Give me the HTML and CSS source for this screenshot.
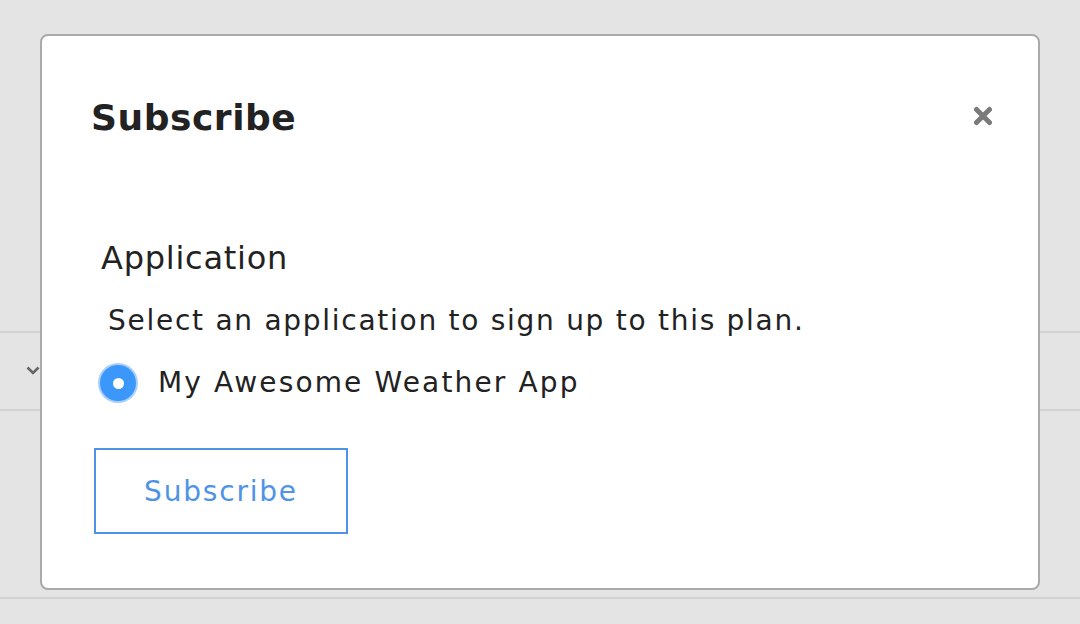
FILE: index.html
```html
<!DOCTYPE html>
<html>
<head>
<meta charset="utf-8">
<link rel="stylesheet" href="styles.css">
</head>
<body>
<div class="page">
  <div class="row-list">
    <div class="row">
      <svg class="chev" width="14" height="10" viewBox="0 0 14 10"><path d="M1.5 1.5 L7 7 L12.5 1.5" fill="none" stroke="#666" stroke-width="2.6"/></svg>
    </div>
  </div>
  <div class="footer-line"></div>
</div>
<div class="modal">
  <div class="modal-head">
    <h2 class="title">Subscribe</h2>
    <svg class="close" width="20" height="20" viewBox="0 0 20 20"><path d="M3.5 3.5 L16.5 16.5 M16.5 3.5 L3.5 16.5" stroke="#7a7a7a" stroke-width="5" stroke-linecap="round"/></svg>
  </div>
  <div class="modal-body">
    <div class="label">Application</div>
    <div class="help">Select an application to sign up to this plan.</div>
    <label class="option">
      <span class="radio"><span class="dot"></span></span>
      <span class="option-text">My Awesome Weather App</span>
    </label>
    <button class="btn">Subscribe</button>
  </div>
</div>
</body>
</html>
```
FILE: styles.css
```css
html, body {
  margin: 0;
  padding: 0;
  width: 1080px;
  height: 624px;
  overflow: hidden;
  background: #e4e4e4;
  font-family: "DejaVu Sans", Verdana, sans-serif;
}
.page {
  position: relative;
  height: 624px;
}
.row-list {
  padding-top: 331px;
}
.row {
  height: 76px;
  border-top: 2px solid #d2d2d2;
  border-bottom: 2px solid #d2d2d2;
  display: flex;
  align-items: center;
  padding-left: 26px;
}
.footer-line {
  margin-top: 186px;
  border-top: 2px solid #d2d2d2;
}
.modal {
  position: absolute;
  left: 40px;
  top: 34px;
  width: 996px;
  height: 552px;
  background: #fff;
  border: 2px solid #aaaaaa;
  border-radius: 8px;
}
.modal-head {
  display: flex;
  justify-content: space-between;
  align-items: center;
  padding: 56px 45px 0 49px;
}
.title {
  margin: 0;
  font-size: 36px;
  font-weight: bold;
  color: #222;
  line-height: 52px;
  letter-spacing: 0.55px;
}
.close {
  display: block;
  margin-top: -4px;
}
.modal-body {
  padding: 92px 0 0 52px;
  display: flex;
  flex-direction: column;
  align-items: flex-start;
}
.label {
  font-size: 32px;
  color: #222;
  line-height: 44px;
  margin-left: 7px;
  letter-spacing: 0.75px;
}
.help {
  font-size: 28px;
  color: #222;
  letter-spacing: 1.73px;
  line-height: 40px;
  margin-top: 21px;
  margin-left: 14px;
}
.option {
  display: flex;
  align-items: center;
  margin-top: 22px;
  margin-left: 6px;
}
.radio {
  width: 36px;
  height: 36px;
  border-radius: 50%;
  background: #3c97fb;
  box-shadow: 0 0 0 2px #a9cffb;
  display: flex;
  align-items: center;
  justify-content: center;
}
.dot {
  width: 11px;
  height: 11px;
  border-radius: 50%;
  background: #fff;
}
.option-text {
  font-size: 28px;
  color: #222;
  letter-spacing: 2.15px;
  margin-left: 22px;
  line-height: 40px;
}
.btn {
  margin-top: 45px;
  width: 254px;
  height: 86px;
  background: #fff;
  border: 2px solid #4f93e6;
  color: #4f93e6;
  font-family: "DejaVu Sans", Verdana, sans-serif;
  font-size: 28px;
  letter-spacing: 1.8px;
  padding: 0;
}
```
